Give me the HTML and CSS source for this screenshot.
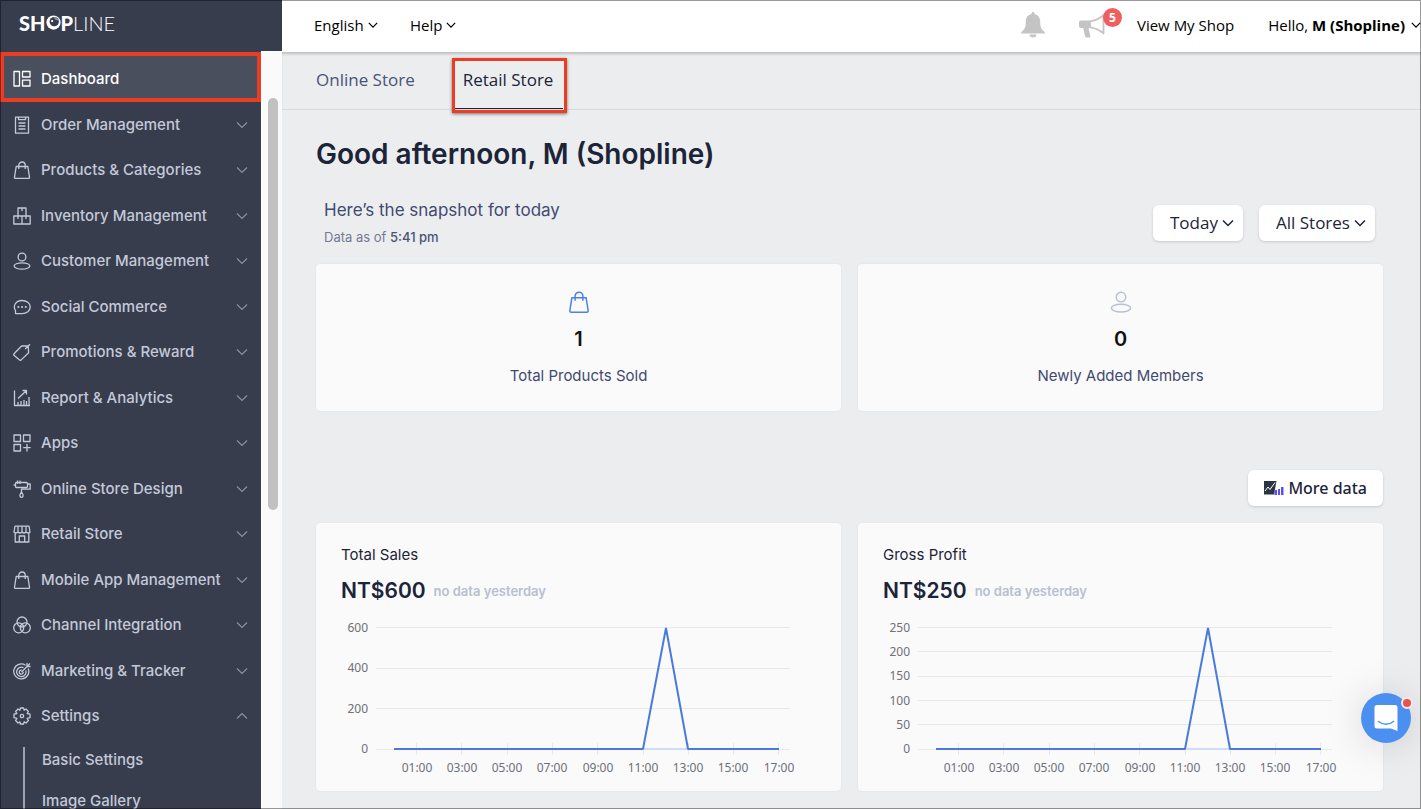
FILE: index.html
```html
<!DOCTYPE html>
<html lang="en">
<head>
    <meta charset="UTF-8">
    <meta name="viewport" content="width=device-width, initial-scale=1.0">
    <title>Dashboard</title>
    <link rel="stylesheet" href="styles.css">
</head>
<body>
    <svg class="sprite" aria-hidden="true">
        <symbol id="down" viewBox="0 0 12 8"><path d="M1 1.5l5 5 5-5"/></symbol>
        <symbol id="up" viewBox="0 0 12 8"><path d="M1 6.5l5-5 5 5"/></symbol>
        <symbol id="dashboard" viewBox="0 0 18 18"><path d="M1 1.500h5.500v14.500H1zM9.500 1.500h7.500v5.500h-7.500zM9.500 10.200h7.500V16h-7.500z"/></symbol>
        <symbol id="order" viewBox="0 0 18 18"><path d="M2.500 1.200h13v16h-13zM5.500 1.200v2.500h7V1.200M5.500 7h7M5.500 10h7M5.500 13h7"/></symbol>
        <symbol id="bag" viewBox="0 0 18 18"><path d="M3.200 5.500h11.600l1.700 10.600c.1.700-.3 1.200-1 1.200h-13c-.7 0-1.100-.5-1-1.200zM5.800 8V4.200a3.200 3.200 0 0 1 6.400 0V8"/></symbol>
        <symbol id="boxes" viewBox="0 0 18 18"><path d="M5 1h8v8H5zM.8 9H9v8H.8zM9 9h8.200v8H9zM9 1v3M5 9v3M13 9v3"/></symbol>
        <symbol id="person" viewBox="0 0 18 18"><circle cx="9" cy="5" r="3.900"/><ellipse cx="9" cy="14" rx="7.900" ry="3.200"/></symbol>
        <symbol id="chat" viewBox="0 0 18 18"><path d="M2.500 15.600V12.500C-.3 8.500 2.300 2.500 9 2.500c4.700 0 8.200 2.800 8.200 6.500s-3.500 6.600-8.200 6.600z"/><path class="dots" d="M5.300 9h.1M9 9h.1M12.700 9h.1"/></symbol>
        <symbol id="tag" viewBox="0 0 18 18"><path d="M1 10.800L8.600 3l6.600-.2.400 7-7.400 7.100c-.6.500-1.200.500-1.700 0L1 12.300c-.4-.5-.4-1 0-1.500zM12.200 6L17 1.200"/></symbol>
        <symbol id="report" viewBox="0 0 18 18"><path d="M1.500 1.500v15h15.500M5 16v-3M8 16v-4M11 16v-5M13.500 16v-4M16 16V8M5 9.500l8-7.500M9.500 1.500H13.500V5.500"/></symbol>
        <symbol id="apps" viewBox="0 0 18 18"><path d="M1 1h6.500v6.500H1zM10.500 1H17v6.500h-6.500zM1 10.500h6.500V17H1zM14 10v7.500M10.200 13.700h7.500"/></symbol>
        <symbol id="roller" viewBox="0 0 18 18"><path d="M3.500 2.500h10a1 1 0 0 1 1 1v3a1 1 0 0 1-1 1h-10a1 1 0 0 1-1-1v-3a1 1 0 0 1 1-1zM.6 5h1.900M4.500.6v3.400M7 .6v3.400M14.500 4h2.700v5.200H8.500v2.600M8.500 11.800l1.500 3c.3 1.500-.3 2.500-1.500 2.500s-1.800-1-1.500-2.500z"/></symbol>
        <symbol id="shop" viewBox="0 0 18 18"><path d="M2 1.200h14L17 7c-1 1.300-2.600 1.300-4 0-1.300 1.300-2.700 1.300-4 0-1.300 1.300-2.700 1.300-4 0-1.400 1.300-3 1.300-4 0zM2.200 8v9h13.600V8M6.300 17v-6h5.400v6M5 7V1.200M9 7V1.200M13 7V1.200"/></symbol>
        <symbol id="circles" viewBox="0 0 18 18"><circle cx="9" cy="6" r="5"/><circle cx="5.700" cy="11.800" r="5"/><circle cx="12.300" cy="11.800" r="5"/></symbol>
        <symbol id="target" viewBox="0 0 18 18"><path d="M12.500 3.200A7.500 7.500 0 1 0 15.200 6.500M10.500 5.700a4.700 4.700 0 1 0 2.300 2.700M8.700 8.200a2 2 0 1 0 1.500 1.600M8.500 10l6-6M14 1v3.500h3.500M14.500 4l2.500-2.500"/></symbol>
        <symbol id="gear" viewBox="0 0 18 18"><path d="M7.400 1h3.200l.5 2.200 1.900-1.200L15.400 4.500l-1.300 2 2.900.7v3.500l-2.900.7 1.300 2.100L13 16l-1.900-1.200-.5 2.200H7.400l-.5-2.200L5 16l-2.400-2.500 1.300-2.100L1 10.700V7.200l2.900-.7-1.300-2L5 2l1.900 1.200z"/><circle cx="9" cy="9" r="1.700"/></symbol>
    </svg>

    <aside class="sidebar">
        <a href="#" class="logo" aria-label="Shopline"><b>SH</b><svg class="logo-o" viewBox="0 0 16 16" aria-hidden="true"><circle cx="8" cy="8" r="7.600" fill="#fff"/><circle cx="8.800" cy="7" r="5" fill="#383d4d"/><path d="M8 2.500c2-1 5.500 1 5.600 5-.8-1.800-2-2.600-3.600-2.500C9.500 4 8.800 3.500 8 2.500z" fill="#8c919f"/><circle cx="6.500" cy="6.500" r="1.200" fill="#fff"/></svg><b>P</b>LINE</a>
        <div class="sidebar-body">
            <nav class="menu">
                <ul>
                    <li><a href="#" class="active"><svg class="icon"><use href="#dashboard"/></svg>Dashboard</a></li>
                    <li><a href="#"><svg class="icon"><use href="#order"/></svg>Order Management<svg class="chevron"><use href="#down"/></svg></a></li>
                    <li><a href="#"><svg class="icon"><use href="#bag"/></svg>Products &amp; Categories<svg class="chevron"><use href="#down"/></svg></a></li>
                    <li><a href="#"><svg class="icon"><use href="#boxes"/></svg>Inventory Management<svg class="chevron"><use href="#down"/></svg></a></li>
                    <li><a href="#"><svg class="icon"><use href="#person"/></svg>Customer Management<svg class="chevron"><use href="#down"/></svg></a></li>
                    <li><a href="#"><svg class="icon"><use href="#chat"/></svg>Social Commerce<svg class="chevron"><use href="#down"/></svg></a></li>
                    <li><a href="#"><svg class="icon"><use href="#tag"/></svg>Promotions &amp; Reward<svg class="chevron"><use href="#down"/></svg></a></li>
                    <li><a href="#"><svg class="icon"><use href="#report"/></svg>Report &amp; Analytics<svg class="chevron"><use href="#down"/></svg></a></li>
                    <li><a href="#"><svg class="icon"><use href="#apps"/></svg>Apps<svg class="chevron"><use href="#down"/></svg></a></li>
                    <li><a href="#"><svg class="icon"><use href="#roller"/></svg>Online Store Design<svg class="chevron"><use href="#down"/></svg></a></li>
                    <li><a href="#"><svg class="icon"><use href="#shop"/></svg>Retail Store<svg class="chevron"><use href="#down"/></svg></a></li>
                    <li><a href="#"><svg class="icon"><use href="#bag"/></svg>Mobile App Management<svg class="chevron"><use href="#down"/></svg></a></li>
                    <li><a href="#"><svg class="icon"><use href="#circles"/></svg>Channel Integration<svg class="chevron"><use href="#down"/></svg></a></li>
                    <li><a href="#"><svg class="icon"><use href="#target"/></svg>Marketing &amp; Tracker<svg class="chevron"><use href="#down"/></svg></a></li>
                    <li>
                        <a href="#"><svg class="icon"><use href="#gear"/></svg>Settings<svg class="chevron"><use href="#up"/></svg></a>
                        <ul class="submenu">
                            <li><a href="#">Basic Settings</a></li>
                            <li><a href="#">Image Gallery</a></li>
                        </ul>
                    </li>
                </ul>
            </nav>
            <div class="scrollbar"><div class="thumb"></div></div>
        </div>
    </aside>

    <div class="page">
        <header class="topbar">
            <div class="dropdown">
                <select aria-label="Language"><option>English</option></select>
                <svg class="arrow"><use href="#down"/></svg>
            </div>
            <button type="button" class="help">Help<svg class="arrow"><use href="#down"/></svg></button>
            <button type="button" class="bell" aria-label="Notifications">
                <svg width="24" height="26" viewBox="0 0 24 26"><path fill="#c4c4c4" d="M12 0c.9 0 1.500.6 1.500 1.500v.6c3.500.8 5.700 3.600 5.700 7.400 0 5 .8 7.600 3.600 9.700.7.500 1.200 1.100 1.200 2.300H0c0-1.200.5-1.800 1.200-2.300 2.800-2.100 3.600-4.700 3.600-9.700 0-3.800 2.200-6.600 5.700-7.400v-.6C10.500.6 11.100 0 12 0zM8.500 22.500h7a3.500 3 0 0 1-7 0z"/></svg>
            </button>
            <button type="button" class="news" aria-label="News, 5 new">
                <svg width="27" height="25" viewBox="0 0 27 25"><path fill="#c4c4c4" d="M2 7.500h9V15H9.500l1.800 8c.1.800-.3 1.400-1 1.400H7.500c-.7 0-1.200-.3-1.400-1L4.200 15H2c-1.200 0-2-.9-2-2V9.500c0-1.100.8-2 2-2z"/><path fill="none" stroke="#c4c4c4" stroke-width="1.800" stroke-linejoin="round" d="M11 8.300c5-.5 9-2.300 13.500-6v18c-4.500-3.700-8.500-5.500-13.500-6z"/></svg>
                <span class="badge">5</span>
            </button>
            <a href="#" class="view-shop">View My Shop</a>
            <button type="button" class="account">Hello,&nbsp;<b>M (Shopline)</b><svg class="arrow"><use href="#down"/></svg></button>
        </header>

        <nav class="tabs">
            <a href="#">Online Store</a>
            <a href="#" class="current">Retail Store</a>
        </nav>

        <main>
            <h1>Good afternoon, M (Shopline)</h1>

            <div class="snapshot">
                <div>
                    <h2>Here’s the snapshot for today</h2>
                    <p>Data as of <b>5:41 pm</b></p>
                </div>
                <div class="filters">
                    <div class="dropdown box">
                        <select aria-label="Period"><option>Today</option></select>
                        <svg class="arrow"><use href="#down"/></svg>
                    </div>
                    <div class="dropdown box">
                        <select aria-label="Store"><option>All Stores</option></select>
                        <svg class="arrow"><use href="#down"/></svg>
                    </div>
                </div>
            </div>

            <div class="cards">
                <section class="card stat">
                    <svg class="stat-icon blue"><use href="#bag"/></svg>
                    <strong>1</strong>
                    <p>Total Products Sold</p>
                </section>
                <section class="card stat">
                    <svg class="stat-icon"><use href="#person"/></svg>
                    <strong>0</strong>
                    <p>Newly Added Members</p>
                </section>
            </div>

            <div class="more">
                <button type="button" class="more-data">
                    <svg width="20" height="16" viewBox="0 0 20 16"><path fill="#2b3442" d="M0 1h12.500L10 14.500H0z"/><path fill="none" stroke="#fff" d="M1 11l3-4 2 2.500 5-7"/><path fill="#5a50f0" d="M10.500 10H13v5h-2.500zM14 9h2v6h-2zM17 7h2.500v8H17z"/></svg>
                    More data
                </button>
            </div>

            <div class="cards">
                <section class="card chart">
                    <h3>Total Sales</h3>
                    <div class="amount"><strong>NT$600</strong><span>no data yesterday</span></div>
                    <svg viewBox="0 0 475 160" role="img" aria-label="Total sales by hour">
                        <path class="grid" d="M35 9.500h414M35 50.500h414M35 90.500h414M35 131.500h414M75.500 125v12M120.500 125v12M166.500 125v12M211.500 125v12M256.500 125v12M302.500 125v12M347.500 125v12M392.500 125v12M437.500 125v12"/>
                        <path class="base" d="M53 131h385"/>
                        <path class="line" d="M53 131h249l23-121 22 121h91"/>
                        <g class="y-labels">
                            <text x="27" y="14">600</text>
                            <text x="27" y="54">400</text>
                            <text x="27" y="95">200</text>
                            <text x="27" y="135">0</text>
                        </g>
                        <g class="x-labels">
                            <text x="76" y="154">01:00</text>
                            <text x="121" y="154">03:00</text>
                            <text x="166" y="154">05:00</text>
                            <text x="211" y="154">07:00</text>
                            <text x="257" y="154">09:00</text>
                            <text x="302" y="154">11:00</text>
                            <text x="347" y="154">13:00</text>
                            <text x="392" y="154">15:00</text>
                            <text x="438" y="154">17:00</text>
                        </g>
                    </svg>
                </section>
                <section class="card chart">
                    <h3>Gross Profit</h3>
                    <div class="amount"><strong>NT$250</strong><span>no data yesterday</span></div>
                    <svg viewBox="0 0 475 160" role="img" aria-label="Gross profit by hour">
                        <path class="grid" d="M35 9.500h414M35 33.500h414M35 58.500h414M35 82.500h414M35 106.500h414M35 131.500h414M75.500 125v12M120.500 125v12M166.500 125v12M211.500 125v12M256.500 125v12M302.500 125v12M347.500 125v12M392.500 125v12M437.500 125v12"/>
                        <path class="base" d="M53 131h385"/>
                        <path class="line" d="M53 131h249l23-121 22 121h91"/>
                        <g class="y-labels">
                            <text x="27" y="14">250</text>
                            <text x="27" y="38">200</text>
                            <text x="27" y="62">150</text>
                            <text x="27" y="87">100</text>
                            <text x="27" y="111">50</text>
                            <text x="27" y="135">0</text>
                        </g>
                        <g class="x-labels">
                            <text x="76" y="154">01:00</text>
                            <text x="121" y="154">03:00</text>
                            <text x="166" y="154">05:00</text>
                            <text x="211" y="154">07:00</text>
                            <text x="257" y="154">09:00</text>
                            <text x="302" y="154">11:00</text>
                            <text x="347" y="154">13:00</text>
                            <text x="392" y="154">15:00</text>
                            <text x="438" y="154">17:00</text>
                        </g>
                    </svg>
                </section>
            </div>
        </main>
    </div>

    <button type="button" class="messenger" aria-label="Open chat">
        <svg width="24" height="28" viewBox="0 0 24 28"><path fill="#fff" d="M3 1h18a2.500 2.500 0 0 1 2.500 2.500V27L17 24.500H3A2.500 2.500 0 0 1 .5 22V3.500A2.500 2.500 0 0 1 3 1z"/><path fill="none" stroke="#4b8ff0" stroke-width="1.500" stroke-linecap="round" d="M4.500 17.500c4.500 3.600 10.500 3.600 15 0"/></svg>
        <span class="dot"></span>
    </button>
</body>
</html>
```
FILE: styles.css
```css
* {
    box-sizing: border-box;
}
body {
    display: flex;
    height: 100vh;
    margin: 0;
    overflow: hidden;
    background: #ecedef;
    color: #1c2438;
    font-family: Inter, "Open Sans", sans-serif;
    font-size: 15px;
    line-height: 1.5;
}
/* thin window frame */
body::after {
    content: "";
    position: fixed;
    inset: 0;
    border: 1px solid rgba(0, 0, 0, 0.4);
    pointer-events: none;
    z-index: 10;
}
h1, h2, h3, p, ul {
    margin: 0;
    padding: 0;
}
ul {
    list-style: none;
}
a {
    color: inherit;
    text-decoration: none;
}
button, select {
    padding: 0;
    border: none;
    background: none;
    color: inherit;
    font: inherit;
    cursor: pointer;
}
select {
    appearance: none;
}
svg {
    flex-shrink: 0;
}
.sprite {
    position: absolute;
    width: 0;
    height: 0;
}

/* sidebar */
.sidebar {
    display: flex;
    flex-direction: column;
    width: 282px;
    flex-shrink: 0;
    color: #c3c9d9;
}
.logo {
    display: flex;
    align-items: center;
    height: 51px;
    padding: 0 0 6px 19px;
    background: #383d4d;
    color: #fff;
    font-family: Lato, sans-serif;
    font-size: 20px;
    font-weight: 300;
}
.logo b {
    font-weight: 900;
}
.logo-o {
    width: 15px;
    height: 15px;
}
.sidebar-body {
    display: flex;
    flex: 1;
    min-height: 0;
}
.menu {
    flex: 1;
    padding-top: 1px;
    overflow: hidden;
    background: #383d4d;
    font-weight: 500;
}
.menu a {
    display: flex;
    align-items: center;
    gap: 10px;
    padding: 12px 13px 11px;
}
.menu .active {
    padding: 12px 9px 7px;
    border: 4px solid #ea3d23;
    background: #4a4f5e;
    color: #fff;
}
.icon {
    width: 18px;
    height: 18px;
    fill: none;
    stroke: currentColor;
    stroke-width: 1.3;
    stroke-linejoin: round;
}
.dots {
    stroke-width: 2;
    stroke-linecap: round;
}
.chevron {
    width: 12px;
    height: 8px;
    margin-left: auto;
    fill: none;
    stroke: #8a90a3;
    stroke-width: 1.2;
}
.submenu {
    margin: 8px 0 0 23px;
    border-left: 2px solid #9da2b2;
}
.submenu a {
    padding: 2px 17px 17px;
}
.scrollbar {
    width: 21px;
    padding: 47px 4px 0 6px;
    border-left: 1px solid #fff;
    background: #fafafa;
}
.thumb {
    height: 58%;
    border-radius: 6px;
    background: #c1c1c1;
}

/* top bar */
.page {
    flex: 1;
    min-width: 0;
}
.topbar {
    display: flex;
    align-items: center;
    height: 52px;
    padding: 0 0 2px 32px;
    overflow: hidden;
    background: #fff;
    color: #000;
    font-family: "Open Sans", sans-serif;
    white-space: nowrap;
}
.topbar button, .dropdown {
    display: flex;
    align-items: center;
}
.arrow {
    width: 10px;
    height: 8px;
    margin-left: 4px;
    fill: none;
    stroke: currentColor;
    stroke-width: 1.5;
}
.dropdown .arrow {
    pointer-events: none;
}
.topbar .help {
    margin-left: 32px;
}
.topbar .bell {
    margin-left: auto;
}
.topbar .news {
    position: relative;
    margin: 0 31px 0 34px;
}
.badge {
    position: absolute;
    top: -5px;
    left: 24px;
    width: 19px;
    height: 19px;
    border-radius: 50%;
    background: #ee5f5f;
    color: #fff;
    font-size: 12px;
    font-weight: 700;
    line-height: 19px;
}
.view-shop {
    margin-right: 34px;
}
.account .arrow {
    margin-left: 6px;
}

/* tabs */
.tabs {
    display: flex;
    gap: 38px;
    padding: 0 34px;
    border-bottom: 1px solid #d3dbe3;
    box-shadow: inset 0 3px 3px -1px rgba(0, 0, 0, 0.2);
    color: #4a5478;
    font-family: "Open Sans", sans-serif;
    font-size: 17px;
}
.tabs a {
    padding: 15px 0 16px;
}
.tabs .current {
    position: relative;
    padding: 15px 10px;
    border-bottom: 1px solid #1c2438;
    color: #1c2438;
}
/* highlight frame over the current tab */
.tabs .current::after {
    content: "";
    position: absolute;
    inset: 6px -4px -5px -1px;
    border: 3px solid #ea3d23;
    box-shadow: 0 1px 3px rgba(0, 0, 0, 0.5);
}

/* content */
main {
    padding: 23px 38px 16px 34px;
}
h1 {
    font-size: 28px;
    font-weight: 600;
    line-height: 42px;
}
.snapshot {
    display: flex;
    justify-content: space-between;
    align-items: flex-end;
    padding: 22px 8px 17px;
    color: #3f4a70;
}
.snapshot h2 {
    font-size: 17px;
    font-weight: 400;
    line-height: 26px;
}
.snapshot p {
    padding-top: 4px;
    color: #737b93;
    font-size: 13px;
    line-height: 20px;
}
.snapshot b {
    color: #4a5478;
    font-weight: 500;
}
.filters {
    display: flex;
    gap: 16px;
    padding-bottom: 6px;
}
.box, .more-data {
    height: 36px;
    border-radius: 6px;
    background: #fff;
    box-shadow: 0 1px 3px rgba(0, 0, 0, 0.15);
    color: #1c2438;
    font-family: "Open Sans", sans-serif;
}
.box {
    padding: 0 9px 0 17px;
    font-size: 17px;
}
.box .arrow {
    width: 12px;
}
.cards {
    display: grid;
    grid-template-columns: 1fr 1fr;
    gap: 17px;
}
.card {
    border-radius: 4px;
    background: #fafafa;
    box-shadow: 0 0 2px rgba(0, 0, 0, 0.08);
}
.stat {
    display: flex;
    flex-direction: column;
    align-items: center;
    padding: 27px 20px 24px;
    color: #3f4a70;
}
.stat-icon {
    width: 22px;
    height: 22px;
    fill: none;
    stroke: #b9bfd4;
    stroke-width: 1.2;
}
.stat-icon.blue {
    stroke: #4a7fe8;
}
.stat strong {
    padding: 10px 0;
    color: #111;
    font-size: 20px;
    font-weight: 600;
    line-height: 32px;
}
.more {
    display: flex;
    justify-content: flex-end;
    padding: 59px 0 17px;
}
.more-data {
    display: flex;
    align-items: center;
    gap: 4px;
    padding: 0 16px;
    font-family: "Noto Sans", sans-serif;
    font-size: 16px;
    font-weight: 500;
}
.chart {
    padding: 20px 25px 13px;
}
.chart h3 {
    font-size: 15px;
    font-weight: 400;
    line-height: 24px;
}
.amount {
    display: flex;
    align-items: center;
    gap: 8px;
    padding-top: 8px;
    line-height: 32px;
}
.amount strong {
    font-size: 21px;
    font-weight: 600;
}
.amount span {
    color: #b9bfcf;
    font-size: 13px;
    font-weight: 600;
}
.chart svg {
    display: block;
    width: 100%;
    margin-top: 11px;
    fill: none;
}
.grid {
    stroke: #e6e8ec;
}
.base {
    stroke: #cfdcfa;
    stroke-width: 2;
}
.line {
    stroke: #4a7bdc;
    stroke-width: 2;
    stroke-linejoin: bevel;
}
.chart text {
    fill: #6e7079;
    font-family: "Noto Sans", sans-serif;
    font-size: 12px;
}
.y-labels {
    text-anchor: end;
}
.x-labels {
    text-anchor: middle;
}

/* chat launcher */
.messenger {
    position: fixed;
    right: 10px;
    bottom: 66px;
    display: flex;
    align-items: center;
    justify-content: center;
    width: 50px;
    height: 50px;
    border-radius: 50%;
    background: #4b8ff0;
    box-shadow: 0 2px 40px rgba(0, 0, 0, 0.15);
}
.dot {
    position: absolute;
    top: 4px;
    right: -2px;
    width: 12px;
    height: 12px;
    border: 2px solid #ecedef;
    border-radius: 50%;
    background: #ee4f4f;
}
```
